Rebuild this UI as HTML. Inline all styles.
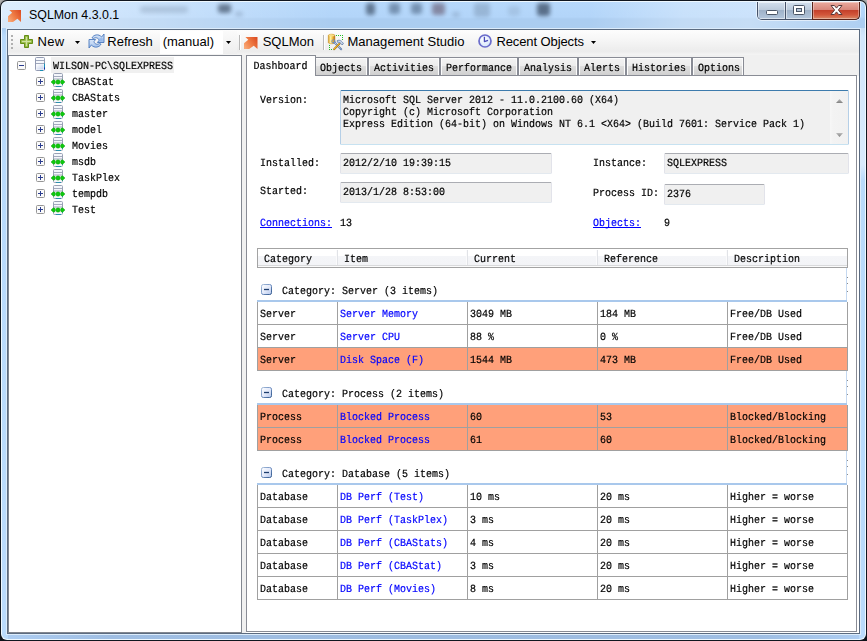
<!DOCTYPE html>
<html><head><meta charset="utf-8"><title>SQLMon 4.3.0.1</title><style>
html,body{margin:0;padding:0;}
body{width:867px;height:641px;overflow:hidden;background:#0d1219;position:relative;font-family:"Liberation Sans",sans-serif;}
div{box-sizing:border-box;}
.s{position:absolute;font:10px/10px "Liberation Mono",monospace;white-space:pre;transform:scaleY(1.1);transform-origin:0 0;text-rendering:geometricPrecision;-webkit-text-stroke:0.18px;}
.u{position:absolute;font-family:"Liberation Sans",sans-serif;white-space:pre;}
svg{position:absolute;overflow:visible;}
</style></head><body>
<div style="position:absolute;left:0px;top:0px;width:7px;height:7px;background:linear-gradient(135deg,#bdbdbd 0,#8a8a8a 40%,#4a4a4a 100%);"></div>
<div style="position:absolute;left:860px;top:0px;width:7px;height:7px;background:linear-gradient(225deg,#bdbdbd 0,#8a8a8a 40%,#4a4a4a 100%);"></div>
<div style="position:absolute;left:0px;top:0px;width:867px;height:641px;border-radius:7px 7px 7px 7px;background:#10161f;"></div>
<div style="position:absolute;left:1px;top:1px;width:865px;height:639px;border-radius:6px;background:#eef8ff;"></div>
<div style="position:absolute;left:2px;top:2px;width:863px;height:637px;border-radius:5px;background:linear-gradient(180deg,#b6d8fb 0px,#b3d5f9 15px,#abcdf1 17px,#abcdf0 26px,#b9dafb 34px,#badbfc 100%);"></div>
<div style="position:absolute;left:2px;top:2px;width:330px;height:26px;border-radius:5px 0 0 0;background:linear-gradient(90deg,rgba(255,255,255,.55) 0,rgba(255,255,255,.35) 35%,rgba(255,255,255,0) 100%);"></div>
<div style="position:absolute;left:590px;top:2px;width:270px;height:26px;background:linear-gradient(100deg,rgba(255,255,255,0) 0,rgba(255,255,255,.28) 35%,rgba(255,255,255,.32) 60%,rgba(255,255,255,.05) 100%);"></div>
<div style="position:absolute;left:8px;top:635px;width:851px;height:4px;background:linear-gradient(90deg,#adcdf2 0,#9fbee3 12%,#9dbce1 50%,#9fbee3 88%,#adcdf2 100%);"></div>
<div style="position:absolute;left:861px;top:28px;width:4px;height:152px;background:linear-gradient(180deg,rgba(255,255,255,.35) 0,rgba(255,255,255,.45) 90%,rgba(255,255,255,0) 100%);"></div>
<div style="position:absolute;left:6px;top:28px;width:855px;height:607px;background:#dcecfb;"></div>
<div style="position:absolute;left:7px;top:29px;width:853px;height:605px;background:#5b6b80;"></div>
<div style="position:absolute;left:8px;top:30px;width:851px;height:603px;background:#f0f0f0;"></div>
<div style="position:absolute;left:218px;top:4px;width:13px;height:9px;background:#1e2c40;opacity:0.55;filter:blur(2.2px);border-radius:3px;"></div>
<div style="position:absolute;left:235px;top:12px;width:8px;height:4px;background:#3a4a60;opacity:0.25;filter:blur(2.2px);border-radius:3px;"></div>
<div style="position:absolute;left:140px;top:6px;width:48px;height:7px;background:#50627a;opacity:0.22;filter:blur(2.2px);border-radius:3px;"></div>
<div style="position:absolute;left:366px;top:3px;width:9px;height:12px;background:#1e2c40;opacity:0.55;filter:blur(2.2px);border-radius:3px;"></div>
<div style="position:absolute;left:389px;top:3px;width:11px;height:11px;background:#2a3f5a;opacity:0.45;filter:blur(2.2px);border-radius:3px;"></div>
<div style="position:absolute;left:411px;top:3px;width:11px;height:11px;background:#2a3f5a;opacity:0.45;filter:blur(2.2px);border-radius:3px;"></div>
<div style="position:absolute;left:432px;top:3px;width:13px;height:12px;background:#4a2a3a;opacity:0.45;filter:blur(2.2px);border-radius:3px;"></div>
<div style="position:absolute;left:452px;top:12px;width:8px;height:5px;background:#50627a;opacity:0.25;filter:blur(2.2px);border-radius:3px;"></div>
<div style="position:absolute;left:474px;top:3px;width:16px;height:14px;background:#5a6e86;opacity:0.3;filter:blur(2.2px);border-radius:3px;"></div>
<div style="position:absolute;left:537px;top:3px;width:13px;height:13px;background:#1e2c40;opacity:0.6;filter:blur(2.2px);border-radius:3px;"></div>
<div style="position:absolute;left:508px;top:6px;width:12px;height:10px;background:#6a7e96;opacity:0.2;filter:blur(2.2px);border-radius:3px;"></div>
<svg style="left:8px;top:10px" width="13" height="12" viewBox="0 0 13 12"><defs><linearGradient id="og" x1="0" y1="0.8" x2="1" y2="0.2"><stop offset="0" stop-color="#f8a877"/><stop offset=".45" stop-color="#f07f47"/><stop offset="1" stop-color="#dd4f25"/></linearGradient></defs><path d="M1.3,0 H13 V12 L9.4,8.8 L5,12 H0 V6.2 L4.1,2.7 Z" fill="url(#og)"/></svg>
<div class="u" style="left:29px;top:9.0034px;font-size:12.4px;line-height:12.4px;color:#000;letter-spacing:0px;">SQLMon 4.3.0.1</div>
<div style="position:absolute;left:756px;top:2px;width:105px;height:19px;border:1px solid rgba(255,255,255,.55);border-top:none;border-radius:0 0 6px 6px;"></div>
<div style="position:absolute;left:757px;top:2px;width:103px;height:18px;border:1px solid #46536a;border-top:none;border-radius:0 0 5px 5px;overflow:hidden;"><div style="position:absolute;left:0;top:0;width:28px;height:17px;background:linear-gradient(180deg,#d3e0ee 0,#bccbdc 45%,#9fb2c9 50%,#b3c6dc 100%);border-right:1px solid #46536a;box-shadow:inset 0 0 0 1px rgba(255,255,255,.5);"></div><div style="position:absolute;left:28px;top:0;width:27px;height:17px;background:linear-gradient(180deg,#d3e0ee 0,#bccbdc 45%,#9fb2c9 50%,#b3c6dc 100%);border-right:1px solid #5a241a;box-shadow:inset 0 0 0 1px rgba(255,255,255,.5);"></div><div style="position:absolute;left:55px;top:0;width:46px;height:17px;background:linear-gradient(180deg,#eaaa9e 0,#d8867a 46%,#c4412b 50%,#d2563a 75%,#d98a68 100%);box-shadow:inset 0 0 0 1px rgba(255,255,255,.35);"></div></div>
<div style="position:absolute;left:812px;top:2px;width:48px;height:18px;border:1px solid #5a241a;border-top:none;border-left:none;border-radius:0 0 5px 0;"></div>
<svg style="left:765px;top:9px" width="14" height="7" viewBox="0 0 14 7"><rect x="1.5" y="1.5" width="11" height="4" rx="1" fill="#fff" stroke="#4a5566" stroke-width="1"/></svg>
<svg style="left:792px;top:4px" width="14" height="12" viewBox="0 0 14 12"><rect x="1.5" y="1.5" width="11" height="9" rx="1" fill="#fff" stroke="#4a5566"/><rect x="4.5" y="4.5" width="5" height="3" fill="#b8c6d8" stroke="#4a5566"/></svg>
<svg style="left:830px;top:4px" width="13" height="12" viewBox="0 0 13 12"><path d="M1 1.5 H4.4 L6.5 4.1 L8.6 1.5 H12 L8.4 6 L12 10.5 H8.6 L6.5 7.9 L4.4 10.5 H1 L4.6 6 Z" fill="#fff" stroke="#5a3a3a" stroke-width="1" stroke-linejoin="round"/></svg>
<div style="position:absolute;left:8px;top:30px;width:851px;height:25px;background:linear-gradient(180deg,#fdfdfd 0,#f6f6f6 40%,#ececec 85%,#f4f4f4 100%);"></div>
<div style="position:absolute;left:11px;top:35px;width:2px;height:2px;background:#b0b0b0;"></div>
<div style="position:absolute;left:11px;top:39px;width:2px;height:2px;background:#b0b0b0;"></div>
<div style="position:absolute;left:11px;top:43px;width:2px;height:2px;background:#b0b0b0;"></div>
<div style="position:absolute;left:11px;top:47px;width:2px;height:2px;background:#b0b0b0;"></div>
<svg style="left:20px;top:35px" width="13" height="13" viewBox="0 0 13 13"><path d="M4.5 0.5 H8.5 V4.5 H12.5 V8.5 H8.5 V12.5 H4.5 V8.5 H0.5 V4.5 H4.5 Z" fill="#86ad2f" stroke="#648f17" stroke-linejoin="round"/><path d="M5.5 1.5 H7.5 V5.5 H11.5 V7.5 H7.5 V11.5 H5.5 V7.5 H1.5 V5.5 H5.5 Z" fill="#b2cf6c"/><path d="M6.5 2 V11 M2 6.5 H11" stroke="#cfe39f" stroke-width="1"/></svg>
<div class="u" style="left:37.5px;top:34.9955px;font-size:13px;line-height:13px;color:#000;letter-spacing:0.3px;">New</div>
<svg style="left:75px;top:41px" width="5" height="3" viewBox="0 0 5 3"><path d="M0 0 H5 L2.5 3 Z" fill="#000"/></svg>
<svg style="left:89px;top:34px" width="15" height="14" viewBox="0 0 15 14"><defs><linearGradient id="rg" x1="0" y1="0" x2="0" y2="1"><stop offset="0" stop-color="#dde9f9"/><stop offset="1" stop-color="#9cbcea"/></linearGradient><linearGradient id="rg2" x1="0" y1="1" x2="0" y2="0"><stop offset="0" stop-color="#dde9f9"/><stop offset="1" stop-color="#9cbcea"/></linearGradient></defs><path d="M3,3.8 C4.5,0.8 9.5,-0.6 12.6,3.0 L15,0 V8.5 H8.4 L10.3,6.1 C8.6,3.4 6.2,3.2 4.6,4.6 Z" fill="url(#rg)" stroke="#4a78bd" stroke-width=".9" stroke-linejoin="round"/><path d="M3,3.8 C4.5,0.8 9.5,-0.6 12.6,3.0 L15,0 V8.5 H8.4 L10.3,6.1 C8.6,3.4 6.2,3.2 4.6,4.6 Z" transform="rotate(180 7.5 7)" fill="url(#rg2)" stroke="#4a78bd" stroke-width=".9" stroke-linejoin="round"/><rect x="10.6" y="4.2" width="3" height="3" fill="#8fb3ea" opacity=".8"/><rect x="1.4" y="6.8" width="3" height="3" fill="#c9dcf6" opacity=".8"/></svg>
<div class="u" style="left:107.3px;top:34.9955px;font-size:13px;line-height:13px;color:#000;letter-spacing:0px;">Refresh</div>
<div style="position:absolute;left:160px;top:31px;width:63px;height:23px;background:#fff;"></div>
<div style="position:absolute;left:223px;top:31px;width:14px;height:23px;background:linear-gradient(180deg,#fafafa,#eeeeee);"></div>
<div class="u" style="left:162.7px;top:34.9955px;font-size:13px;line-height:13px;color:#000;letter-spacing:0px;">(manual)</div>
<svg style="left:226px;top:41px" width="5" height="3" viewBox="0 0 5 3"><path d="M0 0 H5 L2.5 3 Z" fill="#000"/></svg>
<div style="position:absolute;left:239px;top:35px;width:1px;height:15px;background:#b9b9b9;"></div>
<div style="position:absolute;left:240px;top:35px;width:1px;height:15px;background:#fff;"></div>
<svg style="left:244px;top:37px" width="13.5" height="12" viewBox="0 0 13 12" preserveAspectRatio="none"><path d="M1.3,0 H13 V12 L9.4,8.8 L5,12 H0 V6.2 L4.1,2.7 Z" fill="url(#og)"/></svg>
<div class="u" style="left:262.7px;top:34.9955px;font-size:13px;line-height:13px;color:#000;letter-spacing:0px;">SQLMon</div>
<div style="position:absolute;left:323px;top:35px;width:1px;height:15px;background:#b9b9b9;"></div>
<div style="position:absolute;left:324px;top:35px;width:1px;height:15px;background:#fff;"></div>
<svg style="left:328px;top:34px" width="17" height="17" viewBox="0 0 17 17"><defs><linearGradient id="yg" x1="0" y1="0" x2="1" y2="0"><stop offset="0" stop-color="#d99a1c"/><stop offset=".35" stop-color="#fff2a8"/><stop offset=".7" stop-color="#eeb32c"/><stop offset="1" stop-color="#a8561a"/></linearGradient></defs><rect x="8" y="1" width="1" height="1" fill="#22c022"/><rect x="10" y="1" width="1" height="1" fill="#22c022"/><rect x="12" y="1" width="1" height="1" fill="#22c022"/><rect x="14" y="1" width="1" height="1" fill="#22c022"/><rect x="14" y="3" width="1" height="1" fill="#22c022"/><rect x="14" y="5" width="1" height="1" fill="#22c022"/><rect x="1" y="11" width="1" height="1" fill="#22c022"/><rect x="1" y="13" width="1" height="1" fill="#22c022"/><rect x="1" y="15" width="1" height="1" fill="#22c022"/><rect x="3" y="15" width="1" height="1" fill="#22c022"/><path d="M0.3 1.5 C0.3 -0.2 6.9 -0.2 6.9 1.5 V8.5 C6.9 10.2 0.3 10.2 0.3 8.5 Z" fill="url(#yg)" stroke="#c08a1e" stroke-width=".5"/><ellipse cx="3.6" cy="1.4" rx="3" ry="1" fill="#f7dd88"/><path d="M5.8 7.8 L13.2 15.2" stroke="#6482b3" stroke-width="2" stroke-linecap="round"/><path d="M5.8 7.8 L13.2 15.2" stroke="#eef2f9" stroke-width="1" stroke-dasharray="1 1"/><circle cx="5.4" cy="7.4" r="1.6" fill="none" stroke="#6f8fc2" stroke-width="1"/><circle cx="5.4" cy="7.2" r=".7" fill="#f0a818"/><path d="M11.6 9.6 L6.2 15.2" stroke="#8a5c10" stroke-width="1.9" stroke-linecap="round"/><path d="M11.4 9.6 L6.1 15" stroke="#f3b729" stroke-width="1.1" stroke-linecap="round"/><path d="M9.2 6.6 C11.5 5.6 14 6.8 15.4 9.8 L14 10.9 C13 9 11.6 8.2 9.4 8.2 Z" fill="#cfdaec" stroke="#5b78a8" stroke-width=".8"/></svg>
<div class="u" style="left:347.4px;top:34.9955px;font-size:13px;line-height:13px;color:#000;letter-spacing:0.05px;">Management Studio</div>
<svg style="left:478px;top:34px" width="14" height="14" viewBox="0 0 14 14"><defs><radialGradient id="cg" cx=".4" cy=".35" r=".7"><stop offset="0" stop-color="#ffffff"/><stop offset="1" stop-color="#d3e4fb"/></radialGradient></defs><circle cx="7" cy="7" r="6" fill="url(#cg)" stroke="#6a6ccb" stroke-width="1.7"/><path d="M6.4 2.8 V7.6 L10 6.3" fill="none" stroke="#4a4cb8" stroke-width="1.3" stroke-linejoin="round"/></svg>
<div class="u" style="left:496.4px;top:34.9955px;font-size:13px;line-height:13px;color:#000;letter-spacing:-0.1px;">Recent Objects</div>
<svg style="left:591px;top:41px" width="5" height="3" viewBox="0 0 5 3"><path d="M0 0 H5 L2.5 3 Z" fill="#000"/></svg>
<div style="position:absolute;left:8px;top:55px;width:234px;height:578px;background:#fff;border:1px solid #828790;"></div>
<svg style="left:17px;top:61px" width="9" height="9" viewBox="0 0 9 9"><rect x=".5" y=".5" width="8" height="8" rx="1" fill="#fafafa" stroke="#969696"/><path d="M2 4.5 H7" stroke="#2a3c8f" stroke-width="1"/></svg>
<svg style="left:35px;top:57px" width="10" height="14" viewBox="0 0 10 14"><defs><linearGradient id="sv" x1="0" y1="0" x2="1" y2="1"><stop offset="0" stop-color="#ffffff"/><stop offset="1" stop-color="#c3cfea"/></linearGradient></defs><rect x=".5" y=".5" width="9" height="13" rx="1" fill="#f6f8fc" stroke="#939bb3"/><path d="M1 3.5 H9 M1 6.5 H9" stroke="#a0a8bd" stroke-width="1"/><rect x="1.5" y="7.5" width="7" height="5" fill="url(#sv)"/><path d="M9.5 6.5 V12" stroke="#1a8fb5" stroke-width="1"/><path d="M9.5 10.5 V12.5" stroke="#1a2aa5" stroke-width="1"/><path d="M5 13.5 H8" stroke="#1a8fb5" stroke-width="1"/></svg>
<div style="position:absolute;left:51px;top:57px;width:123px;height:16px;background:#f0f0f0;"></div>
<div class="s" style="left:53px;top:62px;color:#000;">WILSON-PC\SQLEXPRESS</div>
<svg style="left:36px;top:77px" width="9" height="9" viewBox="0 0 9 9"><rect x=".5" y=".5" width="8" height="8" rx="1" fill="#fafafa" stroke="#969696"/><path d="M2 4.5 H7" stroke="#2a3c8f" stroke-width="1"/><path d="M4.5 2 V7" stroke="#2a3c8f" stroke-width="1"/></svg>
<svg style="left:51px;top:73px" width="14" height="14" viewBox="0 0 14 14"><rect x="2.5" y=".5" width="9" height="13" rx="1" fill="#f4f6fb" stroke="#98a0b4"/><path d="M3 3.5 H11 M3 6 H11" stroke="#a4abbd" stroke-width="1"/><path d="M5 13.5 H10" stroke="#2a8fb0" stroke-width="1"/><path d="M11.5 8 V12" stroke="#2a8fb0" stroke-width="1"/><path d="M0,9 L2.3,6.8 A2.2 2.2 0 0 1 2.3 11.2 Z" fill="#0fc80f" stroke="#0a9a0a" stroke-width=".4"/><circle cx="7" cy="9" r="2.2" fill="#0fc80f" stroke="#0a9a0a" stroke-width=".4"/><path d="M14,9 L11.7,6.8 A2.2 2.2 0 0 0 11.7 11.2 Z" fill="#0fc80f" stroke="#0a9a0a" stroke-width=".4"/></svg>
<div class="s" style="left:72px;top:78px;color:#000;">CBAStat</div>
<svg style="left:36px;top:93px" width="9" height="9" viewBox="0 0 9 9"><rect x=".5" y=".5" width="8" height="8" rx="1" fill="#fafafa" stroke="#969696"/><path d="M2 4.5 H7" stroke="#2a3c8f" stroke-width="1"/><path d="M4.5 2 V7" stroke="#2a3c8f" stroke-width="1"/></svg>
<svg style="left:51px;top:89px" width="14" height="14" viewBox="0 0 14 14"><rect x="2.5" y=".5" width="9" height="13" rx="1" fill="#f4f6fb" stroke="#98a0b4"/><path d="M3 3.5 H11 M3 6 H11" stroke="#a4abbd" stroke-width="1"/><path d="M5 13.5 H10" stroke="#2a8fb0" stroke-width="1"/><path d="M11.5 8 V12" stroke="#2a8fb0" stroke-width="1"/><path d="M0,9 L2.3,6.8 A2.2 2.2 0 0 1 2.3 11.2 Z" fill="#0fc80f" stroke="#0a9a0a" stroke-width=".4"/><circle cx="7" cy="9" r="2.2" fill="#0fc80f" stroke="#0a9a0a" stroke-width=".4"/><path d="M14,9 L11.7,6.8 A2.2 2.2 0 0 0 11.7 11.2 Z" fill="#0fc80f" stroke="#0a9a0a" stroke-width=".4"/></svg>
<div class="s" style="left:72px;top:94px;color:#000;">CBAStats</div>
<svg style="left:36px;top:109px" width="9" height="9" viewBox="0 0 9 9"><rect x=".5" y=".5" width="8" height="8" rx="1" fill="#fafafa" stroke="#969696"/><path d="M2 4.5 H7" stroke="#2a3c8f" stroke-width="1"/><path d="M4.5 2 V7" stroke="#2a3c8f" stroke-width="1"/></svg>
<svg style="left:51px;top:105px" width="14" height="14" viewBox="0 0 14 14"><rect x="2.5" y=".5" width="9" height="13" rx="1" fill="#f4f6fb" stroke="#98a0b4"/><path d="M3 3.5 H11 M3 6 H11" stroke="#a4abbd" stroke-width="1"/><path d="M5 13.5 H10" stroke="#2a8fb0" stroke-width="1"/><path d="M11.5 8 V12" stroke="#2a8fb0" stroke-width="1"/><path d="M0,9 L2.3,6.8 A2.2 2.2 0 0 1 2.3 11.2 Z" fill="#0fc80f" stroke="#0a9a0a" stroke-width=".4"/><circle cx="7" cy="9" r="2.2" fill="#0fc80f" stroke="#0a9a0a" stroke-width=".4"/><path d="M14,9 L11.7,6.8 A2.2 2.2 0 0 0 11.7 11.2 Z" fill="#0fc80f" stroke="#0a9a0a" stroke-width=".4"/></svg>
<div class="s" style="left:72px;top:110px;color:#000;">master</div>
<svg style="left:36px;top:125px" width="9" height="9" viewBox="0 0 9 9"><rect x=".5" y=".5" width="8" height="8" rx="1" fill="#fafafa" stroke="#969696"/><path d="M2 4.5 H7" stroke="#2a3c8f" stroke-width="1"/><path d="M4.5 2 V7" stroke="#2a3c8f" stroke-width="1"/></svg>
<svg style="left:51px;top:121px" width="14" height="14" viewBox="0 0 14 14"><rect x="2.5" y=".5" width="9" height="13" rx="1" fill="#f4f6fb" stroke="#98a0b4"/><path d="M3 3.5 H11 M3 6 H11" stroke="#a4abbd" stroke-width="1"/><path d="M5 13.5 H10" stroke="#2a8fb0" stroke-width="1"/><path d="M11.5 8 V12" stroke="#2a8fb0" stroke-width="1"/><path d="M0,9 L2.3,6.8 A2.2 2.2 0 0 1 2.3 11.2 Z" fill="#0fc80f" stroke="#0a9a0a" stroke-width=".4"/><circle cx="7" cy="9" r="2.2" fill="#0fc80f" stroke="#0a9a0a" stroke-width=".4"/><path d="M14,9 L11.7,6.8 A2.2 2.2 0 0 0 11.7 11.2 Z" fill="#0fc80f" stroke="#0a9a0a" stroke-width=".4"/></svg>
<div class="s" style="left:72px;top:126px;color:#000;">model</div>
<svg style="left:36px;top:141px" width="9" height="9" viewBox="0 0 9 9"><rect x=".5" y=".5" width="8" height="8" rx="1" fill="#fafafa" stroke="#969696"/><path d="M2 4.5 H7" stroke="#2a3c8f" stroke-width="1"/><path d="M4.5 2 V7" stroke="#2a3c8f" stroke-width="1"/></svg>
<svg style="left:51px;top:137px" width="14" height="14" viewBox="0 0 14 14"><rect x="2.5" y=".5" width="9" height="13" rx="1" fill="#f4f6fb" stroke="#98a0b4"/><path d="M3 3.5 H11 M3 6 H11" stroke="#a4abbd" stroke-width="1"/><path d="M5 13.5 H10" stroke="#2a8fb0" stroke-width="1"/><path d="M11.5 8 V12" stroke="#2a8fb0" stroke-width="1"/><path d="M0,9 L2.3,6.8 A2.2 2.2 0 0 1 2.3 11.2 Z" fill="#0fc80f" stroke="#0a9a0a" stroke-width=".4"/><circle cx="7" cy="9" r="2.2" fill="#0fc80f" stroke="#0a9a0a" stroke-width=".4"/><path d="M14,9 L11.7,6.8 A2.2 2.2 0 0 0 11.7 11.2 Z" fill="#0fc80f" stroke="#0a9a0a" stroke-width=".4"/></svg>
<div class="s" style="left:72px;top:142px;color:#000;">Movies</div>
<svg style="left:36px;top:157px" width="9" height="9" viewBox="0 0 9 9"><rect x=".5" y=".5" width="8" height="8" rx="1" fill="#fafafa" stroke="#969696"/><path d="M2 4.5 H7" stroke="#2a3c8f" stroke-width="1"/><path d="M4.5 2 V7" stroke="#2a3c8f" stroke-width="1"/></svg>
<svg style="left:51px;top:153px" width="14" height="14" viewBox="0 0 14 14"><rect x="2.5" y=".5" width="9" height="13" rx="1" fill="#f4f6fb" stroke="#98a0b4"/><path d="M3 3.5 H11 M3 6 H11" stroke="#a4abbd" stroke-width="1"/><path d="M5 13.5 H10" stroke="#2a8fb0" stroke-width="1"/><path d="M11.5 8 V12" stroke="#2a8fb0" stroke-width="1"/><path d="M0,9 L2.3,6.8 A2.2 2.2 0 0 1 2.3 11.2 Z" fill="#0fc80f" stroke="#0a9a0a" stroke-width=".4"/><circle cx="7" cy="9" r="2.2" fill="#0fc80f" stroke="#0a9a0a" stroke-width=".4"/><path d="M14,9 L11.7,6.8 A2.2 2.2 0 0 0 11.7 11.2 Z" fill="#0fc80f" stroke="#0a9a0a" stroke-width=".4"/></svg>
<div class="s" style="left:72px;top:158px;color:#000;">msdb</div>
<svg style="left:36px;top:173px" width="9" height="9" viewBox="0 0 9 9"><rect x=".5" y=".5" width="8" height="8" rx="1" fill="#fafafa" stroke="#969696"/><path d="M2 4.5 H7" stroke="#2a3c8f" stroke-width="1"/><path d="M4.5 2 V7" stroke="#2a3c8f" stroke-width="1"/></svg>
<svg style="left:51px;top:169px" width="14" height="14" viewBox="0 0 14 14"><rect x="2.5" y=".5" width="9" height="13" rx="1" fill="#f4f6fb" stroke="#98a0b4"/><path d="M3 3.5 H11 M3 6 H11" stroke="#a4abbd" stroke-width="1"/><path d="M5 13.5 H10" stroke="#2a8fb0" stroke-width="1"/><path d="M11.5 8 V12" stroke="#2a8fb0" stroke-width="1"/><path d="M0,9 L2.3,6.8 A2.2 2.2 0 0 1 2.3 11.2 Z" fill="#0fc80f" stroke="#0a9a0a" stroke-width=".4"/><circle cx="7" cy="9" r="2.2" fill="#0fc80f" stroke="#0a9a0a" stroke-width=".4"/><path d="M14,9 L11.7,6.8 A2.2 2.2 0 0 0 11.7 11.2 Z" fill="#0fc80f" stroke="#0a9a0a" stroke-width=".4"/></svg>
<div class="s" style="left:72px;top:174px;color:#000;">TaskPlex</div>
<svg style="left:36px;top:189px" width="9" height="9" viewBox="0 0 9 9"><rect x=".5" y=".5" width="8" height="8" rx="1" fill="#fafafa" stroke="#969696"/><path d="M2 4.5 H7" stroke="#2a3c8f" stroke-width="1"/><path d="M4.5 2 V7" stroke="#2a3c8f" stroke-width="1"/></svg>
<svg style="left:51px;top:185px" width="14" height="14" viewBox="0 0 14 14"><rect x="2.5" y=".5" width="9" height="13" rx="1" fill="#f4f6fb" stroke="#98a0b4"/><path d="M3 3.5 H11 M3 6 H11" stroke="#a4abbd" stroke-width="1"/><path d="M5 13.5 H10" stroke="#2a8fb0" stroke-width="1"/><path d="M11.5 8 V12" stroke="#2a8fb0" stroke-width="1"/><path d="M0,9 L2.3,6.8 A2.2 2.2 0 0 1 2.3 11.2 Z" fill="#0fc80f" stroke="#0a9a0a" stroke-width=".4"/><circle cx="7" cy="9" r="2.2" fill="#0fc80f" stroke="#0a9a0a" stroke-width=".4"/><path d="M14,9 L11.7,6.8 A2.2 2.2 0 0 0 11.7 11.2 Z" fill="#0fc80f" stroke="#0a9a0a" stroke-width=".4"/></svg>
<div class="s" style="left:72px;top:190px;color:#000;">tempdb</div>
<svg style="left:36px;top:205px" width="9" height="9" viewBox="0 0 9 9"><rect x=".5" y=".5" width="8" height="8" rx="1" fill="#fafafa" stroke="#969696"/><path d="M2 4.5 H7" stroke="#2a3c8f" stroke-width="1"/><path d="M4.5 2 V7" stroke="#2a3c8f" stroke-width="1"/></svg>
<svg style="left:51px;top:201px" width="14" height="14" viewBox="0 0 14 14"><rect x="2.5" y=".5" width="9" height="13" rx="1" fill="#f4f6fb" stroke="#98a0b4"/><path d="M3 3.5 H11 M3 6 H11" stroke="#a4abbd" stroke-width="1"/><path d="M5 13.5 H10" stroke="#2a8fb0" stroke-width="1"/><path d="M11.5 8 V12" stroke="#2a8fb0" stroke-width="1"/><path d="M0,9 L2.3,6.8 A2.2 2.2 0 0 1 2.3 11.2 Z" fill="#0fc80f" stroke="#0a9a0a" stroke-width=".4"/><circle cx="7" cy="9" r="2.2" fill="#0fc80f" stroke="#0a9a0a" stroke-width=".4"/><path d="M14,9 L11.7,6.8 A2.2 2.2 0 0 0 11.7 11.2 Z" fill="#0fc80f" stroke="#0a9a0a" stroke-width=".4"/></svg>
<div class="s" style="left:72px;top:206px;color:#000;">Test</div>
<div style="position:absolute;left:246px;top:76px;width:613px;height:557px;background:#fff;"></div>
<div style="position:absolute;left:246px;top:75px;width:611px;height:557px;background:#fff;border:1px solid #898c95;"></div>
<div style="position:absolute;left:314px;top:57px;width:54px;height:19px;border:1px solid #898c95;border-bottom:none;background:linear-gradient(180deg,#f3f3f3 0,#ececec 50%,#dedede 50%,#d0d0d0 100%);box-shadow:inset 1px 1px 0 #fcfcfc,inset -1px 0 0 #fcfcfc;height:18px;"></div>
<div class="s" style="left:320px;top:64px;color:#000;">Objects</div>
<div style="position:absolute;left:368px;top:57px;width:72px;height:19px;border:1px solid #898c95;border-bottom:none;background:linear-gradient(180deg,#f3f3f3 0,#ececec 50%,#dedede 50%,#d0d0d0 100%);box-shadow:inset 1px 1px 0 #fcfcfc,inset -1px 0 0 #fcfcfc;height:18px;"></div>
<div class="s" style="left:374px;top:64px;color:#000;">Activities</div>
<div style="position:absolute;left:440px;top:57px;width:78px;height:19px;border:1px solid #898c95;border-bottom:none;background:linear-gradient(180deg,#f3f3f3 0,#ececec 50%,#dedede 50%,#d0d0d0 100%);box-shadow:inset 1px 1px 0 #fcfcfc,inset -1px 0 0 #fcfcfc;height:18px;"></div>
<div class="s" style="left:446px;top:64px;color:#000;">Performance</div>
<div style="position:absolute;left:518px;top:57px;width:60px;height:19px;border:1px solid #898c95;border-bottom:none;background:linear-gradient(180deg,#f3f3f3 0,#ececec 50%,#dedede 50%,#d0d0d0 100%);box-shadow:inset 1px 1px 0 #fcfcfc,inset -1px 0 0 #fcfcfc;height:18px;"></div>
<div class="s" style="left:524px;top:64px;color:#000;">Analysis</div>
<div style="position:absolute;left:578px;top:57px;width:48px;height:19px;border:1px solid #898c95;border-bottom:none;background:linear-gradient(180deg,#f3f3f3 0,#ececec 50%,#dedede 50%,#d0d0d0 100%);box-shadow:inset 1px 1px 0 #fcfcfc,inset -1px 0 0 #fcfcfc;height:18px;"></div>
<div class="s" style="left:584px;top:64px;color:#000;">Alerts</div>
<div style="position:absolute;left:626px;top:57px;width:66px;height:19px;border:1px solid #898c95;border-bottom:none;background:linear-gradient(180deg,#f3f3f3 0,#ececec 50%,#dedede 50%,#d0d0d0 100%);box-shadow:inset 1px 1px 0 #fcfcfc,inset -1px 0 0 #fcfcfc;height:18px;"></div>
<div class="s" style="left:632px;top:64px;color:#000;">Histories</div>
<div style="position:absolute;left:692px;top:57px;width:52px;height:19px;border:1px solid #898c95;border-bottom:none;background:linear-gradient(180deg,#f3f3f3 0,#ececec 50%,#dedede 50%,#d0d0d0 100%);box-shadow:inset 1px 1px 0 #fcfcfc,inset -1px 0 0 #fcfcfc;height:18px;"></div>
<div class="s" style="left:698px;top:64px;color:#000;">Options</div>
<div style="position:absolute;left:246px;top:55px;width:70px;height:21px;border:1px solid #898c95;border-bottom:none;background:#fff;"></div>
<div class="s" style="left:253.6px;top:62px;color:#000;">Dashboard</div>
<div class="s" style="left:260px;top:96px;color:#000;">Version:</div>
<div style="position:absolute;left:340px;top:90px;width:509px;height:55px;background:#f0f0f0;border:1px solid #b5cfe7;border-top-color:#3d7bad;border-bottom-color:#c7e2f1;border-radius:1.5px;"></div>
<div class="s" style="left:343px;top:96px;color:#000;">Microsoft SQL Server 2012 - 11.0.2100.60 (X64)</div>
<div class="s" style="left:343px;top:108px;color:#000;">Copyright (c) Microsoft Corporation</div>
<div class="s" style="left:343px;top:120px;color:#000;">Express Edition (64-bit) on Windows NT 6.1 &lt;X64&gt; (Build 7601: Service Pack 1)</div>
<div style="position:absolute;left:830px;top:91px;width:18px;height:53px;background:linear-gradient(90deg,#f7f7f7 0,#f3f3f3 3px,#f1f1f1 100%);"></div>
<svg style="left:836px;top:99px" width="7" height="4" viewBox="0 0 7 4"><defs><linearGradient id="sa" x1="0" y1="0" x2="0" y2="1"><stop offset="0" stop-color="#bdbdbd"/><stop offset="1" stop-color="#808080"/></linearGradient></defs><path d="M0 4 L3.5 0 L7 4 Z" fill="url(#sa)"/></svg>
<svg style="left:836px;top:133px" width="7" height="4" viewBox="0 0 7 4"><path d="M0 0 L3.5 4 L7 0 Z" fill="url(#sa)"/></svg>
<div class="s" style="left:260px;top:159px;color:#000;">Installed:</div>
<div style="position:absolute;left:340px;top:153px;width:212px;height:21px;background:#f0f0f0;border:1px solid #e2e3ea;border-top-color:#abadb3;border-bottom-color:#e3e9ef;border-radius:1.5px;"></div>
<div class="s" style="left:343px;top:159px;color:#000;">2012/2/10 19:39:15</div>
<div class="s" style="left:260px;top:187px;color:#000;">Started:</div>
<div style="position:absolute;left:340px;top:182px;width:212px;height:21px;background:#f0f0f0;border:1px solid #e2e3ea;border-top-color:#abadb3;border-bottom-color:#e3e9ef;border-radius:1.5px;"></div>
<div class="s" style="left:343px;top:188px;color:#000;">2013/1/28 8:53:00</div>
<div class="s" style="left:593px;top:159px;color:#000;">Instance:</div>
<div style="position:absolute;left:664px;top:153px;width:185px;height:21px;background:#f0f0f0;border:1px solid #e2e3ea;border-top-color:#abadb3;border-bottom-color:#e3e9ef;border-radius:1.5px;"></div>
<div class="s" style="left:667px;top:159px;color:#000;">SQLEXPRESS</div>
<div class="s" style="left:593px;top:189px;color:#000;">Process ID:</div>
<div style="position:absolute;left:664px;top:184px;width:101px;height:21px;background:#f0f0f0;border:1px solid #e2e3ea;border-top-color:#abadb3;border-bottom-color:#e3e9ef;border-radius:1.5px;"></div>
<div class="s" style="left:667px;top:190px;color:#000;">2376</div>
<div class="s" style="left:260px;top:219px;color:#0000ff;">Connections:</div>
<div style="position:absolute;left:260px;top:227px;width:72px;height:1px;background:#0000ff;"></div>
<div class="s" style="left:340px;top:219px;color:#000;">13</div>
<div class="s" style="left:593px;top:219px;color:#0000ff;">Objects:</div>
<div style="position:absolute;left:593px;top:227px;width:48px;height:1px;background:#0000ff;"></div>
<div class="s" style="left:664px;top:219px;color:#000;">9</div>
<div style="position:absolute;left:257px;top:248px;width:591px;height:20px;border:1px solid #a3a3a3;background:linear-gradient(180deg,#fff 0,#fff 7px,#f4f5f8 7px,#f3f4f7 16px,#d9dadc 16px,#d9dadc 17px,#fbfbfb 17px);"></div>
<div style="position:absolute;left:337px;top:250px;width:1px;height:15px;background:#e1e3e7;"></div>
<div style="position:absolute;left:336px;top:250px;width:1px;height:15px;background:#fbfbfc;"></div>
<div style="position:absolute;left:467px;top:250px;width:1px;height:15px;background:#e1e3e7;"></div>
<div style="position:absolute;left:466px;top:250px;width:1px;height:15px;background:#fbfbfc;"></div>
<div style="position:absolute;left:597px;top:250px;width:1px;height:15px;background:#e1e3e7;"></div>
<div style="position:absolute;left:596px;top:250px;width:1px;height:15px;background:#fbfbfc;"></div>
<div style="position:absolute;left:727px;top:250px;width:1px;height:15px;background:#e1e3e7;"></div>
<div style="position:absolute;left:726px;top:250px;width:1px;height:15px;background:#fbfbfc;"></div>
<div class="s" style="left:264px;top:255px;color:#000;">Category</div>
<div class="s" style="left:344px;top:255px;color:#000;">Item</div>
<div class="s" style="left:474px;top:255px;color:#000;">Current</div>
<div class="s" style="left:604px;top:255px;color:#000;">Reference</div>
<div class="s" style="left:734px;top:255px;color:#000;">Description</div>
<svg style="left:261px;top:284px" width="11" height="11" viewBox="0 0 11 11"><defs><linearGradient id="gi" x1="0" y1="0" x2="1" y2="1"><stop offset="0" stop-color="#ffffff"/><stop offset=".5" stop-color="#e4eafa"/><stop offset="1" stop-color="#b4c6ec"/></linearGradient><linearGradient id="gb" x1="0" y1="0" x2="1" y2="1"><stop offset="0" stop-color="#a9bedb"/><stop offset=".5" stop-color="#6f8fc0"/><stop offset="1" stop-color="#2c5489"/></linearGradient></defs><rect x=".5" y=".5" width="10" height="10" rx="1.8" fill="url(#gi)" stroke="url(#gb)"/><path d="M3 5.5 H8" stroke="#1d3d6d" stroke-width="1.3"/></svg>
<div class="s" style="left:282px;top:287px;color:#000;">Category: Server (3 items)</div>
<div style="position:absolute;left:257px;top:300px;width:590px;height:2px;background:#a9c8ec;"></div>
<div style="position:absolute;left:846px;top:268px;width:1px;height:32px;background:#c5d9f1;"></div>
<div style="position:absolute;left:847px;top:277px;width:1px;height:1px;background:#8c8c8c;"></div>
<div style="position:absolute;left:847px;top:283px;width:1px;height:1px;background:#8c8c8c;"></div>
<div style="position:absolute;left:847px;top:291px;width:1px;height:1px;background:#8c8c8c;"></div>
<div style="position:absolute;left:257px;top:302px;width:591px;height:69px;background:#a0a0a0;"></div>
<div style="position:absolute;left:258px;top:302px;width:79px;height:22px;background:#fff;"></div>
<div class="s" style="left:260px;top:310px;color:#000;">Server</div>
<div style="position:absolute;left:338px;top:302px;width:129px;height:22px;background:#fff;"></div>
<div class="s" style="left:340px;top:310px;color:#0000ff;">Server Memory</div>
<div style="position:absolute;left:468px;top:302px;width:129px;height:22px;background:#fff;"></div>
<div class="s" style="left:470px;top:310px;color:#000;">3049 MB</div>
<div style="position:absolute;left:598px;top:302px;width:129px;height:22px;background:#fff;"></div>
<div class="s" style="left:600px;top:310px;color:#000;">184 MB</div>
<div style="position:absolute;left:728px;top:302px;width:119px;height:22px;background:#fff;"></div>
<div class="s" style="left:730px;top:310px;color:#000;">Free/DB Used</div>
<div style="position:absolute;left:258px;top:325px;width:79px;height:22px;background:#fff;"></div>
<div class="s" style="left:260px;top:333px;color:#000;">Server</div>
<div style="position:absolute;left:338px;top:325px;width:129px;height:22px;background:#fff;"></div>
<div class="s" style="left:340px;top:333px;color:#0000ff;">Server CPU</div>
<div style="position:absolute;left:468px;top:325px;width:129px;height:22px;background:#fff;"></div>
<div class="s" style="left:470px;top:333px;color:#000;">88 %</div>
<div style="position:absolute;left:598px;top:325px;width:129px;height:22px;background:#fff;"></div>
<div class="s" style="left:600px;top:333px;color:#000;">0 %</div>
<div style="position:absolute;left:728px;top:325px;width:119px;height:22px;background:#fff;"></div>
<div class="s" style="left:730px;top:333px;color:#000;">Free/DB Used</div>
<div style="position:absolute;left:258px;top:348px;width:79px;height:22px;background:#ffa07a;"></div>
<div class="s" style="left:260px;top:356px;color:#000;">Server</div>
<div style="position:absolute;left:338px;top:348px;width:129px;height:22px;background:#ffa07a;"></div>
<div class="s" style="left:340px;top:356px;color:#0000ff;">Disk Space (F)</div>
<div style="position:absolute;left:468px;top:348px;width:129px;height:22px;background:#ffa07a;"></div>
<div class="s" style="left:470px;top:356px;color:#000;">1544 MB</div>
<div style="position:absolute;left:598px;top:348px;width:129px;height:22px;background:#ffa07a;"></div>
<div class="s" style="left:600px;top:356px;color:#000;">473 MB</div>
<div style="position:absolute;left:728px;top:348px;width:119px;height:22px;background:#ffa07a;"></div>
<div class="s" style="left:730px;top:356px;color:#000;">Free/DB Used</div>
<svg style="left:261px;top:387px" width="11" height="11" viewBox="0 0 11 11"><defs><linearGradient id="gi" x1="0" y1="0" x2="1" y2="1"><stop offset="0" stop-color="#ffffff"/><stop offset=".5" stop-color="#e4eafa"/><stop offset="1" stop-color="#b4c6ec"/></linearGradient><linearGradient id="gb" x1="0" y1="0" x2="1" y2="1"><stop offset="0" stop-color="#a9bedb"/><stop offset=".5" stop-color="#6f8fc0"/><stop offset="1" stop-color="#2c5489"/></linearGradient></defs><rect x=".5" y=".5" width="10" height="10" rx="1.8" fill="url(#gi)" stroke="url(#gb)"/><path d="M3 5.5 H8" stroke="#1d3d6d" stroke-width="1.3"/></svg>
<div class="s" style="left:282px;top:390px;color:#000;">Category: Process (2 items)</div>
<div style="position:absolute;left:257px;top:403px;width:590px;height:2px;background:#a9c8ec;"></div>
<div style="position:absolute;left:846px;top:371px;width:1px;height:32px;background:#c5d9f1;"></div>
<div style="position:absolute;left:847px;top:380px;width:1px;height:1px;background:#8c8c8c;"></div>
<div style="position:absolute;left:847px;top:386px;width:1px;height:1px;background:#8c8c8c;"></div>
<div style="position:absolute;left:847px;top:394px;width:1px;height:1px;background:#8c8c8c;"></div>
<div style="position:absolute;left:257px;top:405px;width:591px;height:46px;background:#a0a0a0;"></div>
<div style="position:absolute;left:258px;top:405px;width:79px;height:22px;background:#ffa07a;"></div>
<div class="s" style="left:260px;top:413px;color:#000;">Process</div>
<div style="position:absolute;left:338px;top:405px;width:129px;height:22px;background:#ffa07a;"></div>
<div class="s" style="left:340px;top:413px;color:#0000ff;">Blocked Process</div>
<div style="position:absolute;left:468px;top:405px;width:129px;height:22px;background:#ffa07a;"></div>
<div class="s" style="left:470px;top:413px;color:#000;">60</div>
<div style="position:absolute;left:598px;top:405px;width:129px;height:22px;background:#ffa07a;"></div>
<div class="s" style="left:600px;top:413px;color:#000;">53</div>
<div style="position:absolute;left:728px;top:405px;width:119px;height:22px;background:#ffa07a;"></div>
<div class="s" style="left:730px;top:413px;color:#000;">Blocked/Blocking</div>
<div style="position:absolute;left:258px;top:428px;width:79px;height:22px;background:#ffa07a;"></div>
<div class="s" style="left:260px;top:436px;color:#000;">Process</div>
<div style="position:absolute;left:338px;top:428px;width:129px;height:22px;background:#ffa07a;"></div>
<div class="s" style="left:340px;top:436px;color:#0000ff;">Blocked Process</div>
<div style="position:absolute;left:468px;top:428px;width:129px;height:22px;background:#ffa07a;"></div>
<div class="s" style="left:470px;top:436px;color:#000;">61</div>
<div style="position:absolute;left:598px;top:428px;width:129px;height:22px;background:#ffa07a;"></div>
<div class="s" style="left:600px;top:436px;color:#000;">60</div>
<div style="position:absolute;left:728px;top:428px;width:119px;height:22px;background:#ffa07a;"></div>
<div class="s" style="left:730px;top:436px;color:#000;">Blocked/Blocking</div>
<svg style="left:261px;top:467px" width="11" height="11" viewBox="0 0 11 11"><defs><linearGradient id="gi" x1="0" y1="0" x2="1" y2="1"><stop offset="0" stop-color="#ffffff"/><stop offset=".5" stop-color="#e4eafa"/><stop offset="1" stop-color="#b4c6ec"/></linearGradient><linearGradient id="gb" x1="0" y1="0" x2="1" y2="1"><stop offset="0" stop-color="#a9bedb"/><stop offset=".5" stop-color="#6f8fc0"/><stop offset="1" stop-color="#2c5489"/></linearGradient></defs><rect x=".5" y=".5" width="10" height="10" rx="1.8" fill="url(#gi)" stroke="url(#gb)"/><path d="M3 5.5 H8" stroke="#1d3d6d" stroke-width="1.3"/></svg>
<div class="s" style="left:282px;top:470px;color:#000;">Category: Database (5 items)</div>
<div style="position:absolute;left:257px;top:483px;width:590px;height:2px;background:#a9c8ec;"></div>
<div style="position:absolute;left:846px;top:451px;width:1px;height:32px;background:#c5d9f1;"></div>
<div style="position:absolute;left:847px;top:460px;width:1px;height:1px;background:#8c8c8c;"></div>
<div style="position:absolute;left:847px;top:466px;width:1px;height:1px;background:#8c8c8c;"></div>
<div style="position:absolute;left:847px;top:474px;width:1px;height:1px;background:#8c8c8c;"></div>
<div style="position:absolute;left:257px;top:485px;width:591px;height:115px;background:#a0a0a0;"></div>
<div style="position:absolute;left:258px;top:485px;width:79px;height:22px;background:#fff;"></div>
<div class="s" style="left:260px;top:493px;color:#000;">Database</div>
<div style="position:absolute;left:338px;top:485px;width:129px;height:22px;background:#fff;"></div>
<div class="s" style="left:340px;top:493px;color:#0000ff;">DB Perf (Test)</div>
<div style="position:absolute;left:468px;top:485px;width:129px;height:22px;background:#fff;"></div>
<div class="s" style="left:470px;top:493px;color:#000;">10 ms</div>
<div style="position:absolute;left:598px;top:485px;width:129px;height:22px;background:#fff;"></div>
<div class="s" style="left:600px;top:493px;color:#000;">20 ms</div>
<div style="position:absolute;left:728px;top:485px;width:119px;height:22px;background:#fff;"></div>
<div class="s" style="left:730px;top:493px;color:#000;">Higher = worse</div>
<div style="position:absolute;left:258px;top:508px;width:79px;height:22px;background:#fff;"></div>
<div class="s" style="left:260px;top:516px;color:#000;">Database</div>
<div style="position:absolute;left:338px;top:508px;width:129px;height:22px;background:#fff;"></div>
<div class="s" style="left:340px;top:516px;color:#0000ff;">DB Perf (TaskPlex)</div>
<div style="position:absolute;left:468px;top:508px;width:129px;height:22px;background:#fff;"></div>
<div class="s" style="left:470px;top:516px;color:#000;">3 ms</div>
<div style="position:absolute;left:598px;top:508px;width:129px;height:22px;background:#fff;"></div>
<div class="s" style="left:600px;top:516px;color:#000;">20 ms</div>
<div style="position:absolute;left:728px;top:508px;width:119px;height:22px;background:#fff;"></div>
<div class="s" style="left:730px;top:516px;color:#000;">Higher = worse</div>
<div style="position:absolute;left:258px;top:531px;width:79px;height:22px;background:#fff;"></div>
<div class="s" style="left:260px;top:539px;color:#000;">Database</div>
<div style="position:absolute;left:338px;top:531px;width:129px;height:22px;background:#fff;"></div>
<div class="s" style="left:340px;top:539px;color:#0000ff;">DB Perf (CBAStats)</div>
<div style="position:absolute;left:468px;top:531px;width:129px;height:22px;background:#fff;"></div>
<div class="s" style="left:470px;top:539px;color:#000;">4 ms</div>
<div style="position:absolute;left:598px;top:531px;width:129px;height:22px;background:#fff;"></div>
<div class="s" style="left:600px;top:539px;color:#000;">20 ms</div>
<div style="position:absolute;left:728px;top:531px;width:119px;height:22px;background:#fff;"></div>
<div class="s" style="left:730px;top:539px;color:#000;">Higher = worse</div>
<div style="position:absolute;left:258px;top:554px;width:79px;height:22px;background:#fff;"></div>
<div class="s" style="left:260px;top:562px;color:#000;">Database</div>
<div style="position:absolute;left:338px;top:554px;width:129px;height:22px;background:#fff;"></div>
<div class="s" style="left:340px;top:562px;color:#0000ff;">DB Perf (CBAStat)</div>
<div style="position:absolute;left:468px;top:554px;width:129px;height:22px;background:#fff;"></div>
<div class="s" style="left:470px;top:562px;color:#000;">3 ms</div>
<div style="position:absolute;left:598px;top:554px;width:129px;height:22px;background:#fff;"></div>
<div class="s" style="left:600px;top:562px;color:#000;">20 ms</div>
<div style="position:absolute;left:728px;top:554px;width:119px;height:22px;background:#fff;"></div>
<div class="s" style="left:730px;top:562px;color:#000;">Higher = worse</div>
<div style="position:absolute;left:258px;top:577px;width:79px;height:22px;background:#fff;"></div>
<div class="s" style="left:260px;top:585px;color:#000;">Database</div>
<div style="position:absolute;left:338px;top:577px;width:129px;height:22px;background:#fff;"></div>
<div class="s" style="left:340px;top:585px;color:#0000ff;">DB Perf (Movies)</div>
<div style="position:absolute;left:468px;top:577px;width:129px;height:22px;background:#fff;"></div>
<div class="s" style="left:470px;top:585px;color:#000;">8 ms</div>
<div style="position:absolute;left:598px;top:577px;width:129px;height:22px;background:#fff;"></div>
<div class="s" style="left:600px;top:585px;color:#000;">20 ms</div>
<div style="position:absolute;left:728px;top:577px;width:119px;height:22px;background:#fff;"></div>
<div class="s" style="left:730px;top:585px;color:#000;">Higher = worse</div>
</body></html>
